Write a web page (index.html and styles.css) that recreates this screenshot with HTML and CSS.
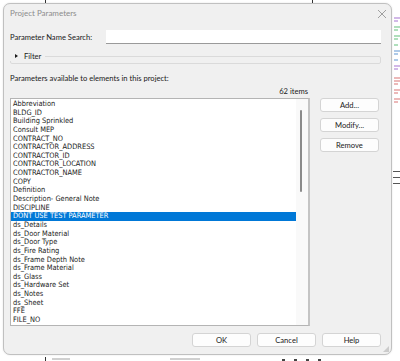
FILE: index.html
```html
<!DOCTYPE html>
<html>
<head>
  <title>Project Parameters</title>
  <link rel="stylesheet" href="styles.css">
</head>
<body>
  <div class="backdrop">
    <span class="bg-mark top-a"></span>
    <span class="bg-mark top-b"></span>

    <div class="dialog">
      <div class="title-bar">
        <span class="title">Project Parameters</span>
        <svg class="close" width="10" height="10" viewBox="0 0 10 10">
          <path d="M1 1 L9 9 M9 1 L1 9" stroke="#8a8a8a" stroke-width="0.8" fill="none"/>
        </svg>
      </div>

      <div class="content">
        <div class="search-row">
          <label class="search-label" for="search">Parameter Name Search:</label>
          <input type="text" id="search" class="search-input">
        </div>

        <fieldset class="filter-box">
          <legend class="filter-head">
            <span class="arrow"></span>
            <span class="filter-text">Filter</span>
          </legend>
        </fieldset>

        <div class="list-caption">Parameters available to elements in this project:</div>

        <div class="main-row">
          <div class="list-col">
            <div class="count">62 items</div>
            <div class="list-box">
              <ul class="items">
                <li>Abbreviation</li>
                <li>BLDG_ID</li>
                <li>Building Sprinkled</li>
                <li>Consult MEP</li>
                <li>CONTRACT_NO</li>
                <li>CONTRACTOR_ADDRESS</li>
                <li>CONTRACTOR_ID</li>
                <li>CONTRACTOR_LOCATION</li>
                <li>CONTRACTOR_NAME</li>
                <li>COPY</li>
                <li>Definition</li>
                <li>Description- General Note</li>
                <li>DISCIPLINE</li>
                <li class="selected">DONT USE TEST PARAMETER</li>
                <li>ds_Details</li>
                <li>ds_Door Material</li>
                <li>ds_Door Type</li>
                <li>ds_Fire Rating</li>
                <li>ds_Frame Depth Note</li>
                <li>ds_Frame Material</li>
                <li>ds_Glass</li>
                <li>ds_Hardware Set</li>
                <li>ds_Notes</li>
                <li>ds_Sheet</li>
                <li>FFE</li>
                <li>FILE_NO</li>
              </ul>
              <div class="scrollbar"><div class="thumb"></div></div>
            </div>
          </div>

          <div class="side-buttons">
            <button class="btn">Add...</button>
            <button class="btn">Modify...</button>
            <button class="btn">Remove</button>
          </div>
        </div>

        <div class="footer-buttons">
          <button class="btn">OK</button>
          <button class="btn">Cancel</button>
          <button class="btn">Help</button>
        </div>
      </div>

      <div class="grip"></div>
    </div>

    <div class="bg-notes">
      <span class="n purple"></span>
      <span class="n purple short"></span>
      <span class="n gap"></span>
      <span class="n green"></span>
      <span class="n green short"></span>
      <span class="n gap"></span>
      <span class="n green"></span>
      <span class="n green short"></span>
      <span class="n gap"></span>
      <span class="n green short"></span>
      <span class="n gap"></span>
      <span class="n blue"></span>
      <span class="n blue short"></span>
      <span class="n gap"></span>
      <span class="n blue short"></span>
      <span class="n gap"></span>
      <span class="n purple"></span>
      <span class="n purple short"></span>
      <span class="n gap"></span>
      <span class="n gap"></span>
      <span class="n red"></span>
      <span class="n red"></span>
      <span class="n red short"></span>
      <span class="n gap"></span>
      <span class="n red"></span>
      <span class="n red short"></span>
      <span class="n gap"></span>
      <span class="n red"></span>
      <span class="n red short"></span>
    </div>

    <div class="bg-rules">
      <span class="rule"></span>
      <span class="rule"></span>
      <span class="rule"></span>
    </div>

    <div class="bg-bottom">
      <span class="tick"></span>
      <span class="faint"></span>
      <span class="faint wide"></span>
      <span class="blocks"></span>
    </div>
  </div>
</body>
</html>
```

FILE: styles.css
```css
body {
  margin: 0;
  background-color: #fff;
  font-family: Lato, "Noto Sans", sans-serif;
  font-size: 7.6px;
  color: #1a1a1a;
}

.backdrop {
  position: relative;
  width: 400px;
  height: 361px;
  overflow: hidden;
}

.dialog {
  position: relative;
  z-index: 1;
  margin: 3px 0 0 3px;
  width: 389px;
  height: 352px;
  box-sizing: border-box;
  background-color: #f0f0f0;
  border: 1px solid #c0c0c0;
  border-radius: 7px;
  box-shadow: 0 0 2px rgba(0, 0, 0, 0.12);
}

.title-bar {
  display: flex;
  align-items: center;
  justify-content: space-between;
  height: 18px;
  padding: 0 4px 0 6px;
}

.title {
  color: #8c8c8c;
  font-size: 8px;
}

.close {
  display: block;
  margin-top: 1px;
}

.content {
  padding: 0 10px 0 6px;
}

.search-row {
  display: flex;
  align-items: center;
  height: 14px;
  margin-top: 8px;
}

.search-label {
  width: 96px;
}

.search-input {
  flex: 1;
  height: 14px;
  box-sizing: border-box;
  border: none;
  border-bottom: 1px solid #9a9a9a;
  background-color: #fff;
  padding: 0;
}

.filter-box {
  margin: 7px 0 0 0;
  padding: 0;
  height: 13px;
  box-sizing: border-box;
  border: 1px solid #dadada;
  border-radius: 2px;
}

.filter-head {
  display: flex;
  align-items: center;
  padding: 0 4px 0 0;
  margin-left: -1px;
  height: 10px;
}

.arrow {
  width: 0;
  height: 0;
  margin-left: 5px;
  border-top: 2.5px solid transparent;
  border-bottom: 2.5px solid transparent;
  border-left: 3px solid #1a1a1a;
}

.filter-text {
  margin-left: 6px;
}

.list-caption {
  margin-top: 9px;
  height: 10px;
  line-height: 10px;
}

.main-row {
  display: flex;
  gap: 10px;
}

.list-col {
  width: 300px;
}

.count {
  text-align: right;
  height: 10px;
  line-height: 10px;
  margin-top: 3px;
  padding-right: 2px;
}

.list-box {
  display: flex;
  height: 228px;
  box-sizing: border-box;
  background-color: #fff;
  border: 1px solid #b4b4b4;
  border-right: 2px solid #c4c4c4;
  overflow: hidden;
  margin-top: 2px;
}

.items {
  flex: 1;
  list-style: none;
  margin: 0;
  padding: 1px 0 0 0;
  font-family: "DejaVu Sans Condensed", "DejaVu Sans", sans-serif;
  font-size: 7.4px;
}

.items li {
  height: 8.65px;
  line-height: 8.65px;
  padding-left: 2px;
  white-space: nowrap;
}

.items li.selected {
  background-color: #0078d7;
  color: #fff;
}

.scrollbar {
  width: 12px;
  background-color: #f9f9f9;
  padding-top: 11px;
}

.thumb {
  width: 2px;
  height: 82px;
  margin-left: 4px;
  border-radius: 1px;
  background-color: #8a8a8a;
}

.side-buttons {
  display: flex;
  flex-direction: column;
  gap: 6px;
  padding-top: 15px;
  width: 59px;
}

.btn {
  height: 14px;
  box-sizing: border-box;
  padding: 0;
  font-family: Lato, "Noto Sans", sans-serif;
  font-size: 7.6px;
  color: #1a1a1a;
  background-color: #fdfdfd;
  border: 1px solid #d4d4d4;
  border-radius: 3px;
}

.footer-buttons {
  display: flex;
  justify-content: flex-end;
  gap: 6px;
  margin-top: 7px;
}

.footer-buttons .btn {
  width: 59px;
}

.grip {
  position: absolute;
  right: 2px;
  bottom: 2px;
  width: 6px;
  height: 6px;
  background-image: radial-gradient(circle, #a0a0a0 0.6px, transparent 0.8px);
  background-size: 2px 2px;
  clip-path: polygon(100% 0, 100% 100%, 0 100%);
}

/* bits of the application window behind the dialog */

.bg-mark {
  position: absolute;
  top: 0;
  width: 1px;
  height: 4px;
  background-color: #333;
}

.bg-mark.top-a {
  left: 45px;
}

.bg-mark.top-b {
  left: 312px;
}

.bg-notes {
  position: absolute;
  left: 394px;
  top: 17px;
  display: flex;
  flex-direction: column;
  gap: 1px;
}

.n {
  display: block;
  width: 6px;
  height: 2px;
  opacity: 0.6;
}

.n.short {
  width: 4px;
}

.purple {
  background-color: #b48ad8;
}

.green {
  background-color: #7cc98f;
}

.blue {
  background-color: #7aa6d8;
}

.red {
  background-color: #e08a8a;
}

.bg-rules {
  position: absolute;
  left: 393px;
  top: 171px;
  display: flex;
  flex-direction: column;
  gap: 5px;
}

.rule {
  display: block;
  width: 7px;
  height: 1px;
  background-color: #555;
}

.bg-bottom {
  position: absolute;
  left: 0;
  top: 357px;
  width: 400px;
  height: 4px;
}

.tick {
  position: absolute;
  left: 45px;
  top: 0;
  width: 1px;
  height: 4px;
  background-color: #333;
}

.faint {
  position: absolute;
  left: 52px;
  top: 1px;
  width: 18px;
  height: 2px;
  background-color: #d0d0d0;
}

.faint.wide {
  left: 170px;
  width: 30px;
}

.blocks {
  position: absolute;
  left: 282px;
  top: 2px;
  width: 46px;
  height: 2px;
  background-image: linear-gradient(90deg, #444 3px, transparent 3px);
  background-size: 12px 2px;
}
```
